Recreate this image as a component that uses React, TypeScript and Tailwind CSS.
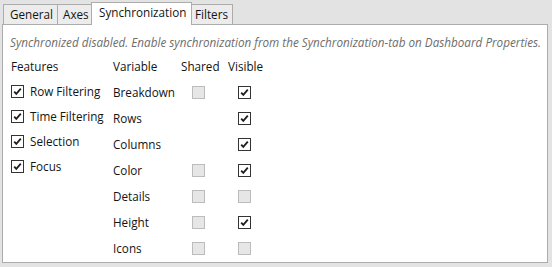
import React from "react";

const font = { fontFamily: '"Open Sans", "Noto Sans", "Liberation Sans", sans-serif' };

function Box({ checked, disabled }: { checked?: boolean; disabled?: boolean }) {
  if (disabled) {
    return <div className="w-[13px] h-[13px] border border-[#bcbcbc] bg-[#e6e6e6]" />;
  }
  return (
    <div className="w-[13px] h-[13px] border border-[#333333] bg-white flex items-center justify-center">
      {checked && (
        <svg width="11" height="11" viewBox="0 0 11 11">
          <polyline points="2.2,5.6 4.3,7.9 8.8,2.6" fill="none" stroke="#1f1f1f" strokeWidth="1.8" />
        </svg>
      )}
    </div>
  );
}

const features = ["Row Filtering", "Time Filtering", "Selection", "Focus"];
const variables: { name: string; shared: boolean; visible: boolean | null }[] = [
  { name: "Breakdown", shared: true, visible: true },
  { name: "Rows", shared: false, visible: true },
  { name: "Columns", shared: false, visible: true },
  { name: "Color", shared: true, visible: true },
  { name: "Details", shared: true, visible: null },
  { name: "Height", shared: true, visible: true },
  { name: "Icons", shared: true, visible: null },
];

export default function App() {
  return (
    <div
      className="w-[552px] h-[267px] bg-[#e3e3e3] pt-[2px] pl-[2px] text-[11.7px] text-[#141414] overflow-hidden"
      style={font}
    >
      <div className="flex items-end h-[22px] pl-[1px]">
        <div className="w-[54px] h-[20px] border-l border-t border-[#acacac] bg-[#ececec] flex items-center pl-[6px] leading-none">General</div>
        <div className="w-[34px] h-[20px] border-l border-t border-[#acacac] bg-[#ececec] flex items-center pl-[5px] leading-none">Axes</div>
        <div className="relative z-10 w-[101px] h-[23px] -mb-[1px] border-l border-t border-r border-[#acacac] bg-white flex items-start pt-[4px] pl-[7px] leading-none">Synchronization</div>
        <div className="w-[41px] h-[20px] border-t border-r border-[#acacac] bg-[#ececec] flex items-center pl-[3px] leading-none">Filters</div>
      </div>
      <div className="w-[546px] h-[239px] border border-[#acacac] bg-white pl-[8px] pt-[9px]">
        <div className="h-[16px] leading-[16px] italic text-[#6d6d6d] -ml-[1px] whitespace-nowrap">
          Synchronized disabled. Enable synchronization from the Synchronization-tab on Dashboard Properties.
        </div>
        <div className="flex mt-[5px]">
          <div className="w-[102px] flex flex-col">
            <div className="h-[24px] flex items-center">Features</div>
            {features.map((f) => (
              <div key={f} className="h-[25px] flex items-center gap-[6px]">
                <Box checked />
                <span>{f}</span>
              </div>
            ))}
          </div>
          <div className="flex flex-col">
            <div className="h-[24px] flex items-center">
              <div className="w-[68px]">Variable</div>
              <div className="w-[47px]">Shared</div>
              <div>Visible</div>
            </div>
            {variables.map((v) => (
              <div key={v.name} className="h-[26px] flex items-center pt-[1px]">
                <div className="w-[68px]">{v.name}</div>
                <div className="w-[47px] pl-[11px]">{v.shared && <Box disabled />}</div>
                <div className="pl-[10px]">{v.visible === null ? <Box disabled /> : <Box checked />}</div>
              </div>
            ))}
          </div>
        </div>
      </div>
    </div>
  );
}
